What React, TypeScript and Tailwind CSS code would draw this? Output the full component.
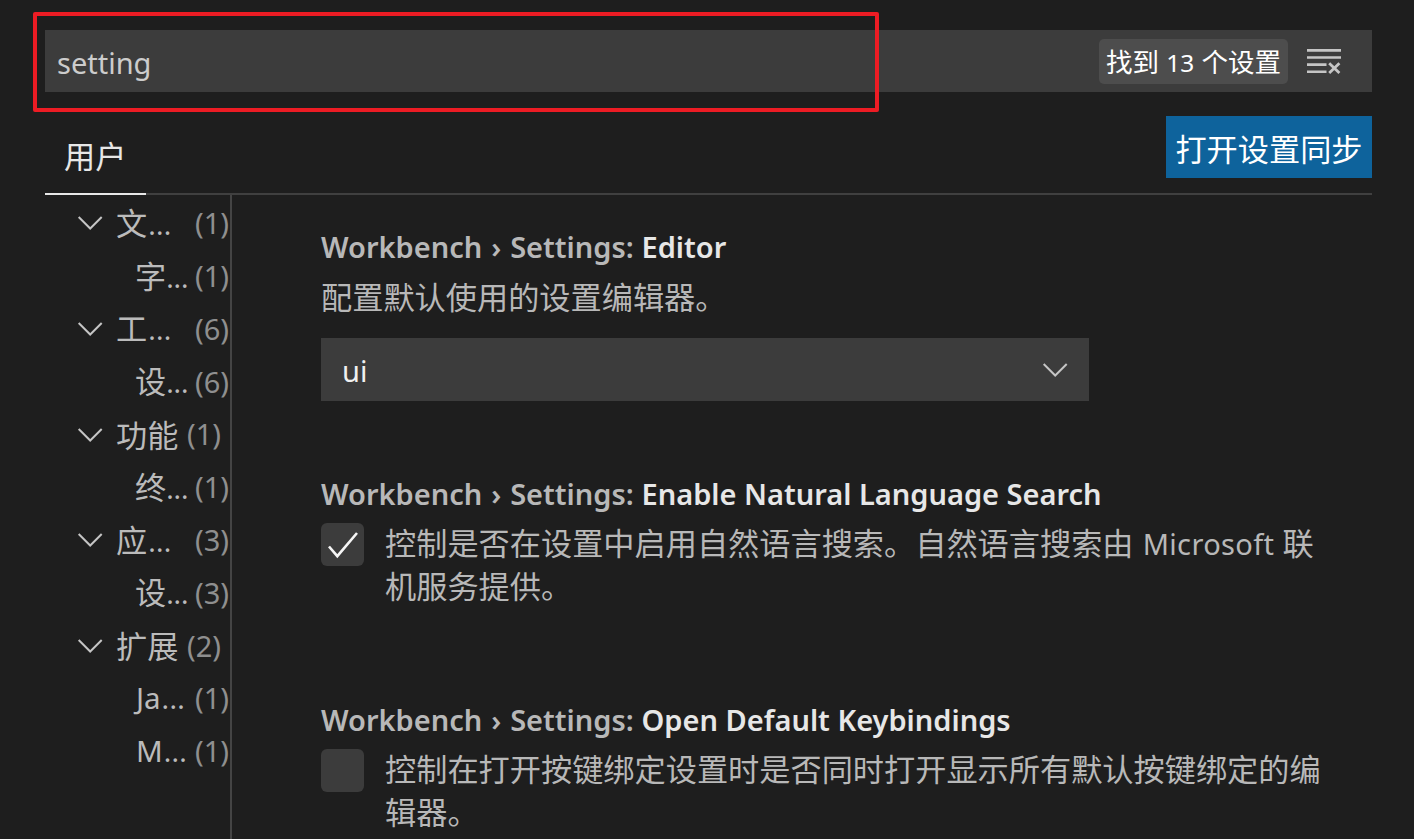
import type { ReactNode } from "react";

type TreeEntry = { label: string; count: number; more?: boolean; child?: boolean; latin?: boolean };

const tree: TreeEntry[] = [
  { label: "文", more: true, count: 1 },
  { label: "字", more: true, count: 1, child: true },
  { label: "工", more: true, count: 6 },
  { label: "设", more: true, count: 6, child: true },
  { label: "功能", count: 1 },
  { label: "终", more: true, count: 1, child: true },
  { label: "应", more: true, count: 3 },
  { label: "设", more: true, count: 3, child: true },
  { label: "扩展", count: 2 },
  { label: "Ja", more: true, count: 1, child: true, latin: true },
  { label: "M", more: true, count: 1, child: true, latin: true },
];

function Chevron() {
  return (
    <svg width="26" height="16" viewBox="0 0 26 16" fill="none" stroke="#c5c5c5" strokeWidth="2" className="shrink-0">
      <path d="M1.7 2 L13.2 13.5 L24.7 2" />
    </svg>
  );
}

function ClearFilterIcon() {
  return (
    <svg width="36" height="28" viewBox="0 0 36 28" fill="none" stroke="#c5c5c5" className="shrink-0">
      <path strokeWidth="2.6" d="M1 3.4H35M1 10.5H35M1 17.6H20.5M1 24.7H20.5" />
      <path strokeWidth="2.8" d="M23.2 16.2L33.4 26M33.4 16.2L23.2 26" />
    </svg>
  );
}

function TreeRow({ label, count, more, child, latin }: TreeEntry) {
  return (
    <div className="flex h-[52.8px] items-center">
      <div className={child ? "w-[90px] shrink-0" : "flex w-[71px] shrink-0 pl-[32px]"}>{!child && <Chevron />}</div>
      <div
        className={`shrink-0 whitespace-nowrap leading-[50px] text-[#bbbbbb] ${latin ? "pb-px pl-px text-[29.5px]" : "text-[31.2px]"} ${
          child ? "w-[60px]" : more ? "w-[79px]" : "w-[71px]"
        }`}
      >
        {label}
        {more && <span className={child && !latin ? "text-[28px] tracking-[-0.1px]" : "ml-px text-[28px] tracking-[0.3px]"}>...</span>}
      </div>
      <div className="whitespace-nowrap pb-px text-[29px] text-[#8f8f8f]">({count})</div>
    </div>
  );
}

function Title({ name }: { name: string }) {
  return (
    <div className="flex h-[42px] items-center whitespace-nowrap text-[29px] font-semibold leading-[42px]">
      <span className="w-[320.5px] text-[#b8b8b8] [word-spacing:1.4px]">Workbench › Settings:</span>
      <span className="text-[#e7e7e7]">{name}</span>
    </div>
  );
}

function CheckSetting({ name, checked, children }: { name: string; checked?: boolean; children: ReactNode }) {
  return (
    <section>
      <Title name={name} />
      <div className="mt-[7px] flex">
        <div className="mt-px flex size-[43px] shrink-0 items-center justify-center rounded-[6px] bg-[#3c3c3c]">
          {checked && (
            <svg width="32" height="28" viewBox="0 0 32 28" fill="none" stroke="#f5f5f5" strokeWidth="2.6">
              <path d="M2 15.5 L10.3 25.2 L30 2" />
            </svg>
          )}
        </div>
        <div className="ml-[21px] whitespace-nowrap text-[31.2px] leading-[43px] text-[#b8b8b8]">{children}</div>
      </div>
    </section>
  );
}

export default function App() {
  return (
    <div className="relative flex h-[839px] w-[1414px] flex-col overflow-hidden bg-[#1e1e1e] pl-[45px] pr-[42px] pt-[30px] font-['Noto_Sans','Noto_Sans_CJK_SC',sans-serif]">
      <div className="flex h-[62px] shrink-0 items-center bg-[#3c3c3c] pl-[12px] pr-[30px]">
        <span className="grow pt-[4px] text-[29px] leading-[58px] text-[#cccccc]">setting</span>
        <span className="mr-[18px] flex h-[45px] w-[189px] items-center justify-center whitespace-nowrap rounded-[5px] bg-[#4d4d4d] pt-[4px] text-[26.5px] text-white">
          找到&nbsp;<span className="px-[0.5px] text-[24.4px]">13</span>&nbsp;个设置
        </span>
        <ClearFilterIcon />
      </div>

      <div className="mt-[24px] flex h-[79px] shrink-0 items-start justify-between border-b-2 border-[#404040]">
        <div className="h-[79px] w-[101px] border-b-2 border-[#e7e7e7] pl-[19px] pt-[18px] text-[31.2px] leading-[44px] text-[#e7e7e7]">
          用户
        </div>
        <button className="h-[62px] w-[206px] whitespace-nowrap bg-[#0e639c] pt-[4px] text-[31.2px] leading-[58px] text-white">
          打开设置同步
        </button>
      </div>

      <div className="flex grow">
        <nav className="w-[187px] shrink-0 border-r-2 border-[#444444] pt-[2px]">
          {tree.map((entry, i) => (
            <TreeRow key={i} {...entry} />
          ))}
        </nav>
        <main className="flex grow flex-col pl-[89px] pt-[31px]">
          <section className="h-[247px] shrink-0">
            <Title name="Editor" />
            <p className="mt-[8px] whitespace-nowrap text-[31.2px] leading-[43px] text-[#b8b8b8]">配置默认使用的设置编辑器。</p>
            <div className="mt-[19px] flex h-[63px] w-[768px] items-center justify-between bg-[#3c3c3c] pl-[21px] pr-[21px]">
              <span className="pt-[2px] text-[29px] text-[#f0f0f0]">ui</span>
              <Chevron />
            </div>
          </section>
          <div className="h-[226px] shrink-0">
            <CheckSetting name="Enable Natural Language Search" checked>
              控制是否在设置中启用自然语言搜索。自然语言搜索由{" "}
              <span className="ml-px text-[29px] tracking-[0.35px]">Microsoft</span> 联
              <br />
              机服务提供。
            </CheckSetting>
          </div>
          <CheckSetting name="Open Default Keybindings">
            控制在打开按键绑定设置时是否同时打开显示所有默认按键绑定的编
            <br />
            辑器。
          </CheckSetting>
        </main>
      </div>

      <div className="pointer-events-none absolute left-[33px] top-[12px] h-[100px] w-[846px] rounded-[2px] border-4 border-[#ed1c24]" />
    </div>
  );
}
